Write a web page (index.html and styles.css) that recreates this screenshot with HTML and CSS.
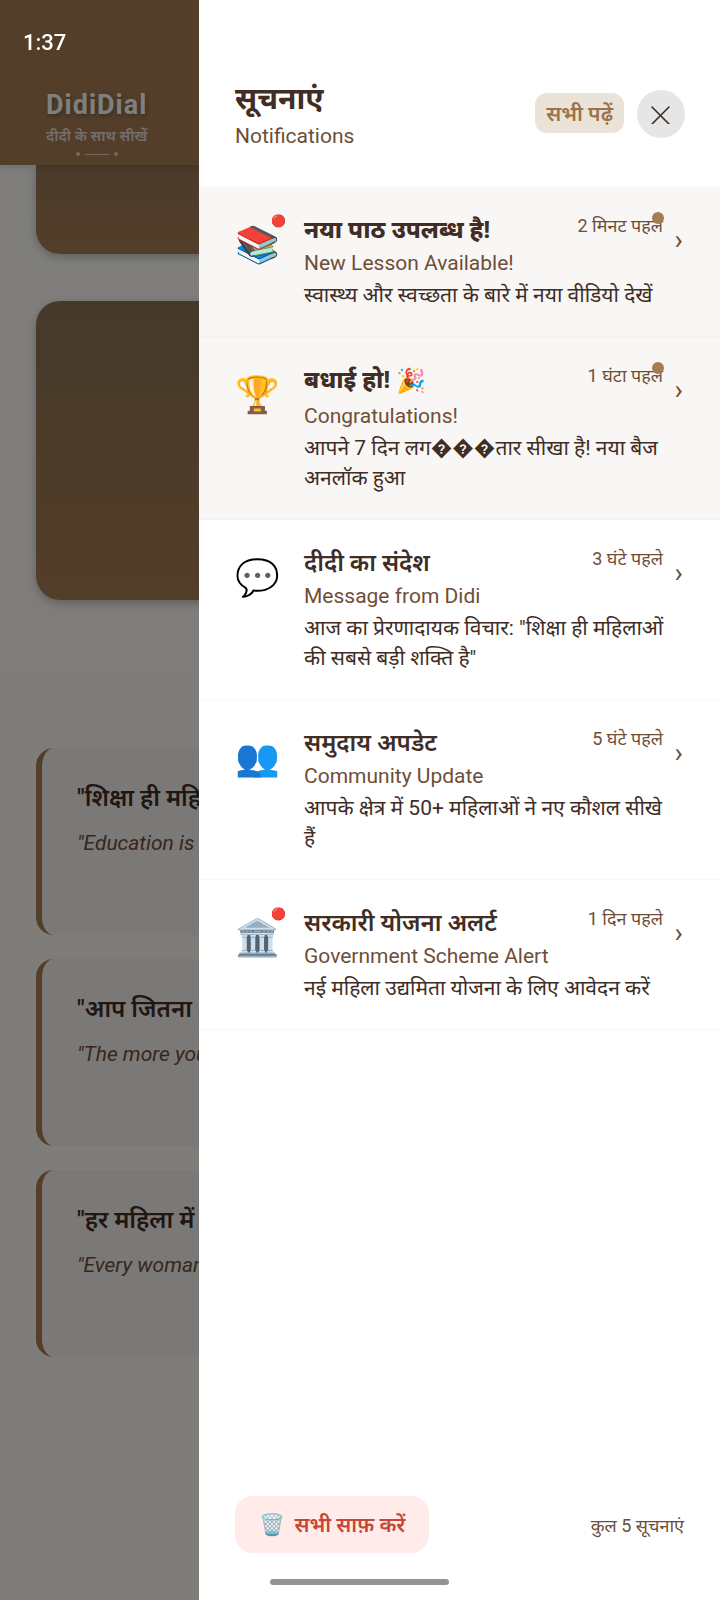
FILE: index.html
```
<!DOCTYPE html>
<html lang="hi">
  <head>
    <meta charset="UTF-8" />
    <meta name="viewport" content="width=device-width, initial-scale=1.0" />
    <title>DidiDial</title>
    <link rel="stylesheet" href="styles.css">
  </head>
  <body>
    <div class="app">
      <header class="app-header">
        <div class="brand">
          <div class="brand-name">DidiDial</div>
          <div class="brand-tagline">दीदी के साथ सीखें</div>
          <div class="brand-line"><i></i><b></b><i></i></div>
        </div>
      </header>
      <main class="app-main">
        <div class="hero hero-top"></div>
        <div class="hero"></div>
        <section class="quotes">
          <div class="quote">
            <p class="quote-hi">"शिक्षा ही महिलाओं की सबसे बड़ी शक्ति है"</p>
            <p class="quote-en">"Education is women's greatest power"</p>
          </div>
          <div class="quote">
            <p class="quote-hi">"आप जितना अधिक सीखेंगी, उतना आगे बढ़ेंगी"</p>
            <p class="quote-en">"The more you learn, the more you grow"</p>
          </div>
          <div class="quote">
            <p class="quote-hi">"हर महिला में एक शक्ति है"</p>
            <p class="quote-en">"Every woman has a power within"</p>
          </div>
        </section>
      </main>
    </div>

    <div class="overlay">
      <aside class="drawer">
        <header class="drawer-header">
          <div class="drawer-title">
            <h1>सूचनाएं</h1>
            <p>Notifications</p>
          </div>
          <button type="button" class="read-all">सभी पढ़ें</button>
          <button type="button" class="close" aria-label="Close">
            <svg width="20" height="20" viewBox="0 0 20 20">
              <path d="M1 3L18 20M18 3L1 20" fill="none" stroke="#3e2c23" stroke-width="1.6" stroke-linecap="round" />
            </svg>
          </button>
        </header>

        <ul class="list">
          <li class="item unread">
            <div class="icon">📚<span class="alert-dot">🔴</span></div>
            <div class="content">
              <div class="row">
                <h2>नया पाठ उपलब्ध है!</h2>
                <span class="time">2 मिनट पहले</span>
              </div>
              <p class="subtitle">New Lesson Available!</p>
              <p class="message">स्वास्थ्य और स्वच्छता के बारे में नया वीडियो देखें</p>
            </div>
            <span class="arrow">›</span>
          </li>
          <li class="item unread">
            <div class="icon">🏆</div>
            <div class="content">
              <div class="row">
                <h2>बधाई हो! <span class="emoji">🎉</span></h2>
                <span class="time">1 घंटा पहले</span>
              </div>
              <p class="subtitle">Congratulations!</p>
              <p class="message">आपने 7 दिन लग���तार सीखा है! नया बैज अनलॉक हुआ</p>
            </div>
            <span class="arrow">›</span>
          </li>
          <li class="item">
            <div class="icon">💬</div>
            <div class="content">
              <div class="row">
                <h2>दीदी का संदेश</h2>
                <span class="time">3 घंटे पहले</span>
              </div>
              <p class="subtitle">Message from Didi</p>
              <p class="message">आज का प्रेरणादायक विचार: "शिक्षा ही महिलाओं की सबसे बड़ी शक्ति है"</p>
            </div>
            <span class="arrow">›</span>
          </li>
          <li class="item">
            <div class="icon">👥</div>
            <div class="content">
              <div class="row">
                <h2>समुदाय अपडेट</h2>
                <span class="time">5 घंटे पहले</span>
              </div>
              <p class="subtitle">Community Update</p>
              <p class="message">आपके क्षेत्र में 50+ महिलाओं ने नए कौशल सीखे हैं</p>
            </div>
            <span class="arrow">›</span>
          </li>
          <li class="item">
            <div class="icon">🏛️<span class="alert-dot">🔴</span></div>
            <div class="content">
              <div class="row">
                <h2>सरकारी योजना अलर्ट</h2>
                <span class="time">1 दिन पहले</span>
              </div>
              <p class="subtitle">Government Scheme Alert</p>
              <p class="message">नई महिला उद्यमिता योजना के लिए आवेदन करें</p>
            </div>
            <span class="arrow">›</span>
          </li>
        </ul>

        <footer class="drawer-footer">
          <button type="button" class="clear-all"><span>🗑️</span> सभी साफ़ करें</button>
          <span class="total">कुल 5 सूचनाएं</span>
        </footer>
      </aside>
    </div>

    <div class="clock">1:37</div>
    <div class="home-bar"></div>
  </body>
</html>
```
FILE: styles.css
```
* {
  box-sizing: border-box;
  margin: 0;
  padding: 0;
}

body {
  font-family: Roboto, "Noto Sans Devanagari", "Noto Sans", "Noto Color Emoji", sans-serif;
  color: #402d25;
  overflow: hidden;
}

button {
  font-family: inherit;
  border: none;
  cursor: pointer;
}

/* page behind the drawer */
.app {
  height: 100vh;
  overflow: hidden;
  background: linear-gradient(#fffefc, #fdfaf4 60%, #fbf9f3);
}

.app-header {
  position: relative;
  height: 165px;
  padding: 88px 46px 0;
  background: #a67c52;
  box-shadow: 0 2px 8px rgba(0, 0, 0, 0.15);
}

.brand {
  display: inline-flex;
  flex-direction: column;
  align-items: center;
}

.brand-name {
  font-size: 27px;
  line-height: 34px;
  font-weight: 700;
  letter-spacing: 1px;
  color: #fff;
  text-shadow: 1px 2px 4px rgba(0, 0, 0, 0.3);
}

.brand-tagline {
  font-size: 15px;
  line-height: 28px;
  font-weight: 600;
  color: #e6ddd4;
}

.brand-line {
  display: flex;
  align-items: center;
  gap: 5px;
  margin-top: 2px;
}

.brand-line i {
  width: 4px;
  height: 4px;
  border-radius: 50%;
  background: #e0d4c8;
}

.brand-line b {
  width: 24px;
  height: 1px;
  background: #e0d4c8;
}

.app-main {
  padding: 0 36px;
}

.hero {
  height: 299px;
  margin-bottom: 148px;
  border-radius: 24px;
  background: linear-gradient(#8b7355, #a67c52);
  box-shadow: 0 3px 10px rgba(0, 0, 0, 0.25);
}

.hero-top {
  height: 89px;
  margin-bottom: 47px;
  border-radius: 0 0 24px 24px;
  background: linear-gradient(#987757, #a67c52);
}

.quotes {
  display: flex;
  flex-direction: column;
  gap: 24px;
}

.quote {
  height: 187px;
  padding: 31px 35px;
  border-left: 6px solid #a67c52;
  border-radius: 18px;
  background: #f5f2ef;
  white-space: nowrap;
  overflow: hidden;
}

.quote-hi {
  font-size: 24px;
  line-height: 38px;
  font-weight: 600;
}

.quote-en {
  margin-top: 12px;
  font-size: 21px;
  line-height: 28px;
  font-style: italic;
  color: #6f4e37;
}

/* drawer */
.overlay {
  position: fixed;
  inset: 0;
  display: flex;
  padding-left: 199px;
  background: rgba(0, 0, 0, 0.5);
}

.drawer {
  flex: 1;
  display: flex;
  flex-direction: column;
  background: #fff;
}

.drawer-header {
  display: flex;
  align-items: flex-start;
  padding: 78px 35px 36px 36px;
}

.drawer-title {
  flex: 1;
}

.drawer-title h1 {
  font-size: 30px;
  line-height: 42px;
  font-weight: 700;
}

.drawer-title p {
  margin-top: 1px;
  font-size: 21px;
  line-height: 30px;
  color: #6f4e37;
}

.read-all {
  height: 40px;
  margin: 15px 13px 0 0;
  padding: 5px 11px 0;
  border-radius: 12px;
  background: #ebe3d8;
  color: #9c7249;
  font-size: 21px;
  font-weight: 600;
}

.close {
  display: flex;
  align-items: center;
  justify-content: center;
  width: 48px;
  height: 48px;
  margin-top: 12px;
  border-radius: 50%;
  background: #e6e6e6;
}

.list {
  flex: 1;
  list-style: none;
}

.item {
  position: relative;
  display: flex;
  padding: 26px 37px 26px 36px;
  border-bottom: 1px solid #f9f8f7;
}

.unread {
  background: #f9f7f6;
  border-color: #f4f2f1;
}

.unread::after {
  content: "";
  position: absolute;
  top: 25px;
  right: 56px;
  width: 12px;
  height: 12px;
  border-radius: 50%;
  background: #a67c52;
}

.icon {
  position: relative;
  width: 69px;
  padding-top: 10px;
  font-size: 36px;
  line-height: 44px;
}

.alert-dot {
  position: absolute;
  top: 0;
  left: 36px;
  font-size: 12px;
  line-height: 16px;
}

.content {
  flex: 1;
}

.row {
  display: flex;
  justify-content: space-between;
}

.row h2 {
  font-size: 24px;
  line-height: 34px;
  font-weight: 600;
}

.unread h2 {
  font-weight: 800;
}

.emoji {
  display: inline-block;
  line-height: 37px;
  vertical-align: top;
}

.time {
  margin-right: 4px;
  font-size: 18px;
  line-height: 26px;
  color: #6f4e37;
}

.subtitle {
  margin-top: 1px;
  font-size: 21px;
  line-height: 30px;
  color: #6f4e37;
}

.message {
  margin-top: 2px;
  font-size: 21px;
  line-height: 30px;
}

.arrow {
  width: 16px;
  padding-top: 10px;
  text-align: right;
  font-size: 28px;
  line-height: 34px;
  color: #6f4e37;
}

.drawer-footer {
  display: flex;
  align-items: center;
  justify-content: space-between;
  padding: 0 36px 47px;
}

.clear-all {
  height: 57px;
  padding: 4px 24px 0;
  border-radius: 18px;
  background: #ffebe9;
  color: #c74635;
  font-size: 21px;
  font-weight: 600;
}

.clear-all span {
  margin-right: 4px;
}

.total {
  padding-top: 4px;
  font-size: 18px;
  color: #6f4e37;
}

/* system bars */
.clock {
  position: fixed;
  top: 29px;
  left: 23px;
  font-size: 22px;
  line-height: 28px;
  font-weight: 500;
  color: #fff;
}

.home-bar {
  position: fixed;
  bottom: 15px;
  left: 50%;
  width: 179px;
  height: 6px;
  margin-left: -90px;
  border-radius: 3px;
  background: #949494;
}
```
